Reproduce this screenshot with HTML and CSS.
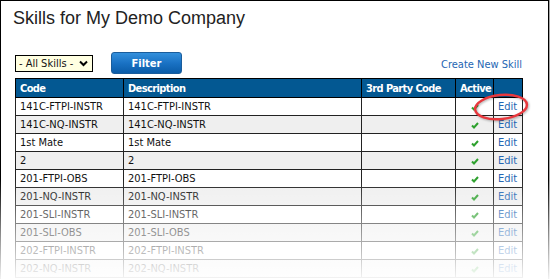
FILE: index.html
```html
<!DOCTYPE html>
<html lang="en">
<head>
    <meta charset="UTF-8">
    <title>Skills for My Demo Company</title>
    <link rel="stylesheet" href="styles.css">
</head>
<body>
    <div class="frame">
        <h1 class="page-title">Skills for My Demo Company</h1>

        <!-- filter bar -->
        <div class="toolbar">
            <div class="skill-select">
                <span>- All Skills -</span>
                <svg width="9" height="7" viewBox="0 0 9 7"><path d="M1 1.5 L4.5 5 L8 1.5" fill="none" stroke="#000" stroke-width="2"/></svg>
            </div>
            <button class="filter-btn">Filter</button>
            <a class="create-link" href="#">Create New Skill</a>
        </div>

        <table class="skills-table">
            <colgroup>
                <col class="c-code">
                <col class="c-desc">
                <col class="c-third">
                <col class="c-active">
                <col class="c-edit">
            </colgroup>
            <thead>
                <tr>
                    <th>Code</th>
                    <th>Description</th>
                    <th>3rd Party Code</th>
                    <th>Active</th>
                    <th></th>
                </tr>
            </thead>
            <tbody>
                <tr><td>141C-FTPI-INSTR</td><td>141C-FTPI-INSTR</td><td></td><td class="active"><svg class="tick" width="8" height="7" viewBox="0 0 8 7"><path d="M1 3.5 L3 5.5 L7 1" fill="none" stroke="#2ea12e" stroke-width="2"/></svg></td><td class="edit"><a href="#">Edit</a></td></tr>
                <tr><td>141C-NQ-INSTR</td><td>141C-NQ-INSTR</td><td></td><td class="active"><svg class="tick" width="8" height="7" viewBox="0 0 8 7"><path d="M1 3.5 L3 5.5 L7 1" fill="none" stroke="#2ea12e" stroke-width="2"/></svg></td><td class="edit"><a href="#">Edit</a></td></tr>
                <tr><td>1st Mate</td><td>1st Mate</td><td></td><td class="active"><svg class="tick" width="8" height="7" viewBox="0 0 8 7"><path d="M1 3.5 L3 5.5 L7 1" fill="none" stroke="#2ea12e" stroke-width="2"/></svg></td><td class="edit"><a href="#">Edit</a></td></tr>
                <tr><td>2</td><td>2</td><td></td><td class="active"><svg class="tick" width="8" height="7" viewBox="0 0 8 7"><path d="M1 3.5 L3 5.5 L7 1" fill="none" stroke="#2ea12e" stroke-width="2"/></svg></td><td class="edit"><a href="#">Edit</a></td></tr>
                <tr><td>201-FTPI-OBS</td><td>201-FTPI-OBS</td><td></td><td class="active"><svg class="tick" width="8" height="7" viewBox="0 0 8 7"><path d="M1 3.5 L3 5.5 L7 1" fill="none" stroke="#2ea12e" stroke-width="2"/></svg></td><td class="edit"><a href="#">Edit</a></td></tr>
                <tr><td>201-NQ-INSTR</td><td>201-NQ-INSTR</td><td></td><td class="active"><svg class="tick" width="8" height="7" viewBox="0 0 8 7"><path d="M1 3.5 L3 5.5 L7 1" fill="none" stroke="#2ea12e" stroke-width="2"/></svg></td><td class="edit"><a href="#">Edit</a></td></tr>
                <tr><td>201-SLI-INSTR</td><td>201-SLI-INSTR</td><td></td><td class="active"><svg class="tick" width="8" height="7" viewBox="0 0 8 7"><path d="M1 3.5 L3 5.5 L7 1" fill="none" stroke="#2ea12e" stroke-width="2"/></svg></td><td class="edit"><a href="#">Edit</a></td></tr>
                <tr><td>201-SLI-OBS</td><td>201-SLI-OBS</td><td></td><td class="active"><svg class="tick" width="8" height="7" viewBox="0 0 8 7"><path d="M1 3.5 L3 5.5 L7 1" fill="none" stroke="#2ea12e" stroke-width="2"/></svg></td><td class="edit"><a href="#">Edit</a></td></tr>
                <tr><td>202-FTPI-INSTR</td><td>202-FTPI-INSTR</td><td></td><td class="active"><svg class="tick" width="8" height="7" viewBox="0 0 8 7"><path d="M1 3.5 L3 5.5 L7 1" fill="none" stroke="#2ea12e" stroke-width="2"/></svg></td><td class="edit"><a href="#">Edit</a></td></tr>
                <tr><td>202-NQ-INSTR</td><td>202-NQ-INSTR</td><td></td><td class="active"><svg class="tick" width="8" height="7" viewBox="0 0 8 7"><path d="M1 3.5 L3 5.5 L7 1" fill="none" stroke="#2ea12e" stroke-width="2"/></svg></td><td class="edit"><a href="#">Edit</a></td></tr>
            </tbody>
        </table>

        <!-- red callout round the first Edit link -->
        <svg class="callout" width="62" height="34" viewBox="0 0 62 34">
            <ellipse cx="31" cy="17" rx="26" ry="12" transform="rotate(-6 31 17)" fill="none" stroke="#e8383d" stroke-width="2.5"/>
        </svg>
    </div>

    <!-- screenshot fade at the bottom -->
    <div class="fade"></div>
</body>
</html>
```

FILE: styles.css
```css
/* frame of the screenshot */
body {
    position: relative;
    margin: 0;
    height: 279px;
    overflow: hidden;
    background: #fff;
    font-family: 'DejaVu Sans Condensed', 'DejaVu Sans', sans-serif;
    font-size: 11px;
    color: #111;
}

.frame {
    position: relative;
    width: 549px;
    height: 279px;
    box-sizing: border-box;
    padding-left: 14px;
    border: 1px solid #000;
    border-bottom: none;
    box-shadow: 1px 0 1px rgba(0, 0, 0, 0.35);
    overflow: hidden;
}

.page-title {
    margin: 0 0 0 -2px;
    height: 49px;
    box-sizing: border-box;
    padding: 7px 0 0 0;
    font-family: 'Liberation Sans', Arial, sans-serif;
    font-weight: normal;
    font-size: 18px;
    color: #222;
}

/* filter bar */
.toolbar {
    display: flex;
    align-items: flex-start;
    width: 507px;
    height: 28px;
}

.skill-select {
    display: flex;
    align-items: center;
    justify-content: space-between;
    margin-top: 5px;
    width: 78px;
    height: 17px;
    box-sizing: border-box;
    padding: 0 4px 0 3px;
    background: #ffffe1;
    border: 1px solid #000;
}

.filter-btn {
    margin: 2px 0 0 18px;
    width: 71px;
    height: 22px;
    padding: 0;
    border: 1px solid #1a5d9c;
    border-radius: 3px;
    background: linear-gradient(to bottom, #3390dc 0%, #1a72c4 50%, #0b5ca8 100%);
    color: #fff;
    font-family: 'DejaVu Sans Condensed', sans-serif;
    font-weight: bold;
    font-size: 11px;
}

.create-link {
    margin: 8px 0 0 auto;
    color: #2466b3;
    text-decoration: none;
}

/* table */
.skills-table {
    width: 507px;
    border-collapse: collapse;
    table-layout: fixed;
}

.c-code { width: 108px; }
.c-desc { width: 238px; }
.c-third { width: 94px; }
.c-active { width: 38px; }
.c-edit { width: 29px; }

.skills-table th {
    height: 18px;
    padding: 0 0 0 4px;
    background: #035892;
    color: #fff;
    text-align: left;
    font-weight: bold;
    letter-spacing: -0.6px;
    border: 1px solid #000;
}

.skills-table td {
    height: 17px;
    padding: 0 0 0 4px;
    border: 1px solid #222;
    white-space: nowrap;
}

.skills-table tbody tr:nth-child(even) td {
    background: #efefef;
}

.skills-table td.active {
    text-align: center;
    padding: 0;
}

.tick {
    vertical-align: middle;
}

.skills-table td.edit a {
    color: #2466b3;
    text-decoration: none;
}

.callout {
    position: absolute;
    left: 469px;
    top: 89px;
    filter: drop-shadow(1px 1px 1px rgba(0, 0, 0, 0.3));
}

.fade {
    position: absolute;
    left: 0;
    right: 0;
    bottom: 0;
    height: 100px;
    background: linear-gradient(to bottom, rgba(255, 255, 255, 0) 0%, rgba(255, 255, 255, 0.55) 55%, rgba(255, 255, 255, 0.95) 100%);
}
```
